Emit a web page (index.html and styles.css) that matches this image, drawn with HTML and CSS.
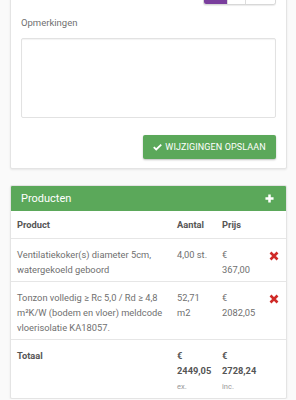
FILE: index.html
```html
<!DOCTYPE html>
<html lang="nl">
<head>
<meta charset="utf-8">
<link rel="stylesheet" href="styles.css">
</head>
<body>
<div class="page">
  <section class="card card-form">
    <div class="toggle-row">
      <div class="toggle">
        <span class="seg seg-active"></span>
        <span class="seg seg-mid"></span>
        <span class="seg seg-last"></span>
      </div>
    </div>
    <label class="label">Opmerkingen</label>
    <div class="textarea"></div>
    <div class="actions">
      <button class="btn-save">
        <svg class="check" viewBox="0 0 12 10" width="9" height="8"><path d="M1 5.2 L4.3 8.3 L11 1.7" fill="none" stroke="#fff" stroke-width="2.4"/></svg>
        WIJZIGINGEN OPSLAAN
      </button>
    </div>
  </section>

  <section class="card card-products">
    <header class="panel-head">
      <span class="panel-title">Producten</span>
      <svg class="plus" viewBox="0 0 10 10" width="9" height="9"><path d="M5 0.5 V9.5 M0.5 5 H9.5" stroke="#fff" stroke-width="2.8"/></svg>
    </header>
    <table class="products">
      <colgroup>
        <col class="c-prod"><col class="c-qty"><col class="c-price"><col class="c-act">
      </colgroup>
      <thead>
        <tr><th>Product</th><th>Aantal</th><th>Prijs</th><th></th></tr>
      </thead>
      <tbody>
        <tr>
          <td>Ventilatiekoker(s) diameter 5cm, watergekoeld geboord</td>
          <td>4,00 st.</td>
          <td>€ 367,00</td>
          <td class="act"><svg class="del" viewBox="0 0 10 10" width="10" height="10"><path d="M1.5 1.5 L8.5 8.5 M8.5 1.5 L1.5 8.5" stroke="#cf2a27" stroke-width="2.6"/></svg></td>
        </tr>
        <tr>
          <td>Tonzon volledig ≥ Rc 5,0 / Rd ≥ 4,8 m²K/W (bodem en vloer) meldcode vloerisolatie KA18057.</td>
          <td>52,71 m2</td>
          <td>€ 2082,05</td>
          <td class="act"><svg class="del" viewBox="0 0 10 10" width="10" height="10"><path d="M1.5 1.5 L8.5 8.5 M8.5 1.5 L1.5 8.5" stroke="#cf2a27" stroke-width="2.6"/></svg></td>
        </tr>
        <tr class="total">
          <td><strong>Totaal</strong></td>
          <td><strong>€ 2449,05</strong><small>ex.</small></td>
          <td><strong>€ 2728,24</strong><small>inc.</small></td>
          <td></td>
        </tr>
      </tbody>
    </table>
  </section>
</div>
</body>
</html>
```

FILE: styles.css
```css
html, body {
  margin: 0;
  padding: 0;
  background: #fafafa;
  font-family: Roboto, "Liberation Sans", sans-serif;
  color: #666;
}

.page {
  padding: 0 9px 0 10px;
  margin-top: -30px;
}

.card {
  background: #fff;
  border: 1px solid #e4e4e4;
  border-radius: 2px;
  box-shadow: 0 1px 2px rgba(0,0,0,0.08);
}

.card-form {
  padding: 0 10px 9px 10px;
}

.toggle-row {
  display: flex;
  justify-content: flex-end;
}

.toggle {
  display: flex;
  height: 33px;
  border: 1px solid #d8d8d8;
  border-top: none;
  border-radius: 0 0 3px 3px;
  overflow: hidden;
  box-shadow: 0 1px 1px rgba(0,0,0,0.08);
}

.seg {
  display: block;
  height: 100%;
}
.seg-active { width: 23px; background: #7a3e9d; }
.seg-mid { width: 17px; background: #fff; border-left: 1px solid #ddd; }
.seg-last { width: 29px; background: #fff; border-left: 1px solid #ddd; }

.label {
  display: block;
  margin-top: 12px;
  font-size: 9.5px;
  line-height: 12px;
  color: #707070;
}

.textarea {
  margin-top: 9px;
  height: 78px;
  border: 1px solid #e2e2e2;
  border-radius: 2px;
  box-shadow: inset 0 1px 1px rgba(0,0,0,0.05);
}

.actions {
  display: flex;
  justify-content: flex-end;
  margin-top: 17px;
}

.btn-save {
  display: flex;
  align-items: center;
  gap: 3px;
  height: 24px;
  width: 133px;
  justify-content: center;
  padding: 0;
  border: none;
  border-radius: 2px;
  background: #5ba85a;
  color: #fff;
  font-family: Roboto, "Liberation Sans", sans-serif;
  font-size: 9px;
  letter-spacing: 0.1px;
  box-shadow: 0 1px 2px rgba(0,0,0,0.25);
}

.card-products {
  margin-top: 16px;
  overflow: hidden;
}

.panel-head {
  display: flex;
  align-items: center;
  justify-content: space-between;
  height: 25px;
  padding: 0 12px 0 10px;
  background: #5ba85a;
  color: #fff;
}

.panel-title {
  font-size: 11px;
}

.products {
  width: 100%;
  border-collapse: collapse;
  table-layout: fixed;
  font-size: 9.3px;
  line-height: 15px;
}

.c-prod { width: 160px; }
.c-qty { width: 45px; }
.c-price { width: 45px; }
.c-act { width: 25px; }

.products th {
  text-align: left;
  font-weight: bold;
  color: #555;
  padding: 6px 6px 6px 6px;
  height: 15px;
  border-bottom: 1px solid #e6e6e6;
}

.products td {
  vertical-align: top;
  padding: 8px 6px 4px 6px;
  color: #707070;
  border-bottom: 1px solid #e6e6e6;
}

.products tr:last-child td {
  border-bottom: none;
}

.products td.act {
  padding: 11px 0 0 0;
  text-align: center;
}

.del { display: inline-block; }

.total td strong {
  display: block;
  color: #555;
}

.total td small {
  display: block;
  margin-top: 1px;
  font-size: 7.5px;
  color: #999;
}
```
